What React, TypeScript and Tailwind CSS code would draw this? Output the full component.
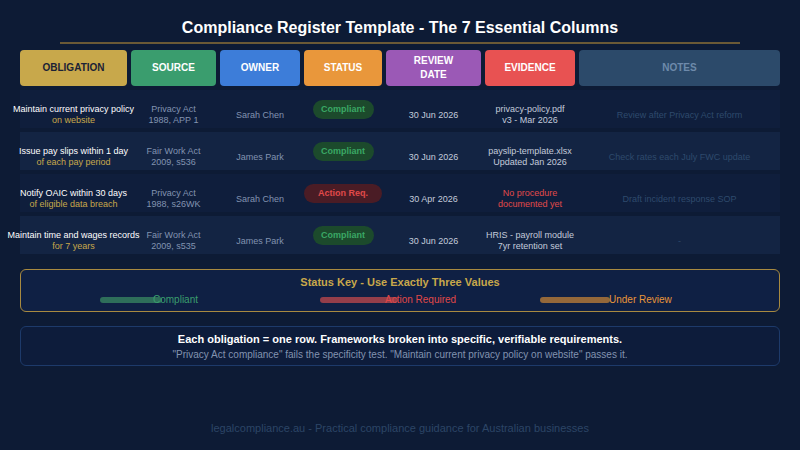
import React from "react";

const cols = "grid grid-cols-[107px_85px_80px_78px_95px_90px_201px] gap-x-[4px]";

interface Row {
  title: string;
  sub: string;
  source: [string, string];
  owner: string;
  status: "ok" | "action";
  date: string;
  evidence: [string, string];
  evidenceMissing?: boolean;
  note: string;
}

const rows: Row[] = [
  {
    title: "Maintain current privacy policy",
    sub: "on website",
    source: ["Privacy Act", "1988, APP 1"],
    owner: "Sarah Chen",
    status: "ok",
    date: "30 Jun 2026",
    evidence: ["privacy-policy.pdf", "v3 - Mar 2026"],
    note: "Review after Privacy Act reform",
  },
  {
    title: "Issue pay slips within 1 day",
    sub: "of each pay period",
    source: ["Fair Work Act", "2009, s536"],
    owner: "James Park",
    status: "ok",
    date: "30 Jun 2026",
    evidence: ["payslip-template.xlsx", "Updated Jan 2026"],
    note: "Check rates each July FWC update",
  },
  {
    title: "Notify OAIC within 30 days",
    sub: "of eligible data breach",
    source: ["Privacy Act", "1988, s26WK"],
    owner: "Sarah Chen",
    status: "action",
    date: "30 Apr 2026",
    evidence: ["No procedure", "documented yet"],
    evidenceMissing: true,
    note: "Draft incident response SOP",
  },
  {
    title: "Maintain time and wages records",
    sub: "for 7 years",
    source: ["Fair Work Act", "2009, s535"],
    owner: "James Park",
    status: "ok",
    date: "30 Jun 2026",
    evidence: ["HRIS - payroll module", "7yr retention set"],
    note: "-",
  },
];

const headers = [
  { label: "OBLIGATION", cls: "bg-[#c8a84b] text-[#1b2236]" },
  { label: "SOURCE", cls: "bg-[#3a9d6e] text-white" },
  { label: "OWNER", cls: "bg-[#3d7dd9] text-white" },
  { label: "STATUS", cls: "bg-[#e9973b] text-white" },
  { label: "REVIEW\nDATE", cls: "bg-[#9b59b6] text-white" },
  { label: "EVIDENCE", cls: "bg-[#e85252] text-white" },
  { label: "NOTES", cls: "bg-[#2c4a6a] text-[#6e8aab]" },
];

// text sits a few px below the row centre, like the original
const Cell: React.FC<{ children: React.ReactNode; className?: string }> = ({ children, className = "" }) => (
  <div className={`flex flex-col items-center justify-center whitespace-nowrap text-center pt-[12px] ${className}`}>
    {children}
  </div>
);

export default function App() {
  return (
    <div className="w-[800px] h-[450px] overflow-hidden bg-[#0d1b35] font-['Liberation_Sans',Arial,sans-serif]">
      <h1 className="pt-[18px] text-center text-[16px] leading-[19px] font-bold text-white">
        Compliance Register Template - The 7 Essential Columns
      </h1>
      <div className="mx-[60px] mt-[5px] h-[2px] bg-[#6b5a36]" />

      <div className="mx-[20px] mt-[6px]">
        <div className={cols}>
          {headers.map((h) => (
            <div
              key={h.label}
              className={`h-[36px] rounded-[4px] flex items-center justify-center text-center whitespace-pre-line text-[10px] leading-[14px] font-bold ${h.cls}`}
            >
              {h.label}
            </div>
          ))}
        </div>

        {rows.map((r, i) => (
          <div
            key={r.title}
            className={`${cols} mt-[4px] h-[38px] text-[9px] leading-[11px] ${i % 2 === 0 ? "bg-[#0f1e3c]" : "bg-[#132443]"}`}
          >
            <Cell>
              <span className="text-white">{r.title}</span>
              <span className="text-[#c8a84b]">{r.sub}</span>
            </Cell>
            <Cell className="text-[#8293b0]">
              <span>{r.source[0]}</span>
              <span>{r.source[1]}</span>
            </Cell>
            <Cell className="text-[#8293b0]">{r.owner}</Cell>
            <div className="flex items-center justify-center">
              {r.status === "ok" ? (
                <span className="flex items-center justify-center w-[61px] h-[19px] rounded-full bg-[#1c4a2c] text-[#3aa865] font-bold text-[9px]">
                  Compliant
                </span>
              ) : (
                <span className="flex items-center justify-center w-[78px] h-[19px] rounded-full bg-[#4a1c25] text-[#e04a4a] font-bold text-[9px]">
                  Action Req.
                </span>
              )}
            </div>
            <Cell className="text-[#c3cbdb]">{r.date}</Cell>
            <Cell className={r.evidenceMissing ? "text-[#e04a4a]" : "text-[#c3cbdb]"}>
              <span>{r.evidence[0]}</span>
              <span>{r.evidence[1]}</span>
            </Cell>
            <Cell className="text-[#2e4a6c]">{r.note}</Cell>
          </div>
        ))}

        <div className="mt-[15px] h-[43px] rounded-[6px] border border-[#a88a40] bg-[#0f2044] pt-[5px]">
          <div className="text-center text-[11px] leading-[14px] font-bold text-[#c8a84b]">
            Status Key - Use Exactly Three Values
          </div>
          <div className="flex pl-[79px] mt-[5px] text-[10px] leading-[12px]">
            <div className="w-[220px] flex items-center">
              <span className="w-[62px] h-[6px] rounded-full bg-[#2e6e5a]" />
              <span className="-ml-[9px] text-[#3a9e6e]">Compliant</span>
            </div>
            <div className="w-[220px] flex items-center">
              <span className="w-[78px] h-[6px] rounded-full bg-[#943e4a]" />
              <span className="-ml-[13px] text-[#e04848]">Action Required</span>
            </div>
            <div className="w-[220px] flex items-center">
              <span className="w-[70px] h-[6px] rounded-full bg-[#94683a]" />
              <span className="-ml-[1px] text-[#e8963a]">Under Review</span>
            </div>
          </div>
        </div>

        <div className="mt-[14px] h-[40px] rounded-[6px] border border-[#1d3a6a] bg-[#0d1c3b] pt-[5px] text-center">
          <div className="text-[11px] leading-[14px] font-bold text-white">
            Each obligation = one row. Frameworks broken into specific, verifiable requirements.
          </div>
          <div className="mt-[3px] text-[10px] leading-[12px] text-[#8293b0]">
            "Privacy Act compliance" fails the specificity test. "Maintain current privacy policy on website" passes it.
          </div>
        </div>
      </div>

      <div className="mt-[56px] text-center text-[11px] leading-[13px] text-[#2c4566]">
        legalcompliance.au - Practical compliance guidance for Australian businesses
      </div>
    </div>
  );
}
